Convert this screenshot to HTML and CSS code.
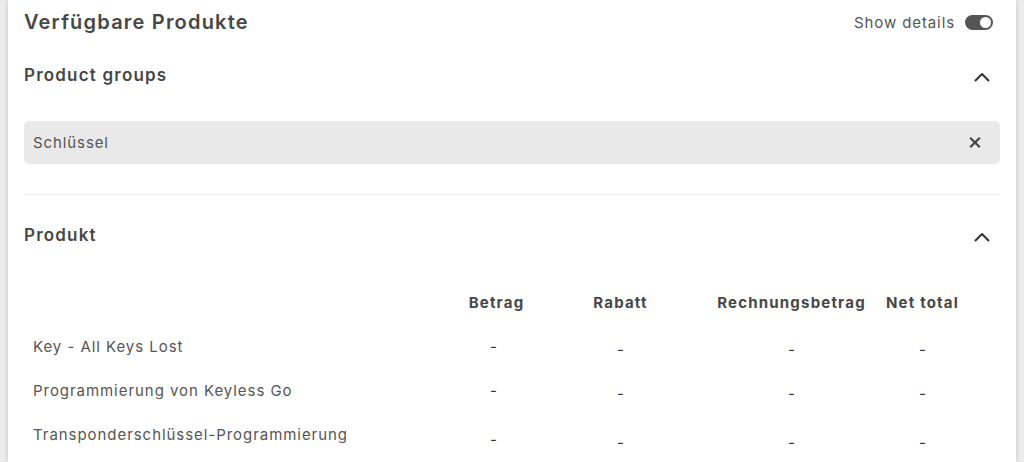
FILE: index.html
```html
<!DOCTYPE html>
<html lang="de">
<head>
<meta charset="utf-8">
<title>Verfügbare Produkte</title>
<link rel="stylesheet" href="styles.css">
</head>
<body>
<div class="card">
  <div class="top">
    <h1 class="title">Verfügbare Produkte</h1>
    <div class="details">
      <span class="details-label">Show details</span>
      <span class="toggle"><span class="knob"></span></span>
    </div>
  </div>

  <div class="section-head">
    <h2 class="section-title">Product groups</h2>
    <svg class="chevron" width="16" height="10" viewBox="0 0 16 10"><path d="M1.5 8.5 L8 2 L14.5 8.5" fill="none" stroke="#333" stroke-width="2" stroke-linecap="round" stroke-linejoin="round"/></svg>
  </div>

  <div class="select">
    <span class="select-value">Schlüssel</span>
    <svg class="clear" width="12" height="11" viewBox="0 0 12 11"><path d="M1.2 0.8 L10.8 10.2 M10.8 0.8 L1.2 10.2" fill="none" stroke="#444" stroke-width="2.2" stroke-linecap="butt"/></svg>
  </div>

  <div class="divider"></div>

  <div class="section-head">
    <h2 class="section-title">Produkt</h2>
    <svg class="chevron" width="16" height="10" viewBox="0 0 16 10"><path d="M1.5 8.5 L8 2 L14.5 8.5" fill="none" stroke="#333" stroke-width="2" stroke-linecap="round" stroke-linejoin="round"/></svg>
  </div>

  <div class="table">
    <div class="th"></div>
    <div class="th">Betrag</div>
    <div class="th">Rabatt</div>
    <div class="th">Rechnungsbetrag</div>
    <div class="th">Net total</div>

    <div class="name">Key - All Keys Lost</div>
    <div class="dash dash-first">-</div>
    <div class="dash">-</div>
    <div class="dash">-</div>
    <div class="dash">-</div>

    <div class="name">Programmierung von Keyless Go</div>
    <div class="dash dash-first">-</div>
    <div class="dash">-</div>
    <div class="dash">-</div>
    <div class="dash">-</div>

    <div class="name">Transponderschlüssel-Programmierung</div>
    <div class="dash dash-first low">-</div>
    <div class="dash low">-</div>
    <div class="dash low">-</div>
    <div class="dash low">-</div>
  </div>
</div>
</body>
</html>
```

FILE: styles.css
```css
* { box-sizing: border-box; }
html, body { margin: 0; padding: 0; }
body {
  background: #ececec;
  font-family: Inter, "Open Sans", sans-serif;
  color: #555;
  height: 462px;
  overflow: hidden;
}
.card {
  margin: 0 8px;
  background: #fff;
  box-shadow: 0 0 5px rgba(0,0,0,0.18);
  padding: 10px 16px 0;
  height: 462px;
}
.top {
  display: flex;
  justify-content: space-between;
  align-items: center;
  height: 24px;
}
.title {
  margin: 0;
  font-size: 20px;
  font-weight: 600;
  color: #474747;
  line-height: 24px;
  letter-spacing: 1.2px;
}
.details {
  display: flex;
  align-items: center;
  gap: 10px;
  padding-right: 7px;
}
.details-label {
  font-size: 15px;
  color: #555;
  letter-spacing: 0.9px;
}
.toggle {
  width: 28px;
  height: 15px;
  border-radius: 8px;
  background: #555;
  display: flex;
  align-items: center;
  justify-content: flex-end;
  padding-right: 2px;
}
.knob {
  width: 11px;
  height: 11px;
  border-radius: 50%;
  background: #fff;
}
.section-head {
  display: flex;
  justify-content: space-between;
  align-items: center;
  height: 40px;
  margin-top: 21px;
  padding-right: 10px;
}
.section-title {
  margin: 0;
  font-size: 17px;
  font-weight: 600;
  color: #474747;
  letter-spacing: 1.2px;
}
.chevron { display: block; margin-top: 4px; }
.select {
  margin-top: 26px;
  height: 43px;
  background: #e9e9e9;
  border-radius: 5px;
  display: flex;
  align-items: center;
  justify-content: space-between;
  padding: 0 19px 0 9px;
}
.select-value { font-size: 15px; color: #555; letter-spacing: 0.9px; }
.clear { display: block; }
.divider {
  margin-top: 30px;
  height: 1px;
  background: #ececec;
}
.divider + .section-head { margin-top: 20px; }
.table {
  margin-top: 26px;
  display: grid;
  grid-template-columns: 1fr 73px 175px 167px 95px;
  grid-template-rows: 43px 44px 44px 44px;
  padding-right: 30px;
  align-items: center;
}
.th {
  font-size: 15px;
  font-weight: 700;
  color: #474747;
  text-align: center;
  white-space: nowrap;
  letter-spacing: 1.2px;
}
.name {
  font-size: 15px;
  color: #555;
  padding-left: 9px;
  letter-spacing: 0.95px;
}
.dash {
  font-size: 15px;
  color: #333;
  text-align: center;
  padding-top: 6px;
}
.dash-first { padding-top: 0; padding-right: 6px; }
.dash.low { padding-top: 16px; }
.dash-first.low { padding-top: 10px; }
```
